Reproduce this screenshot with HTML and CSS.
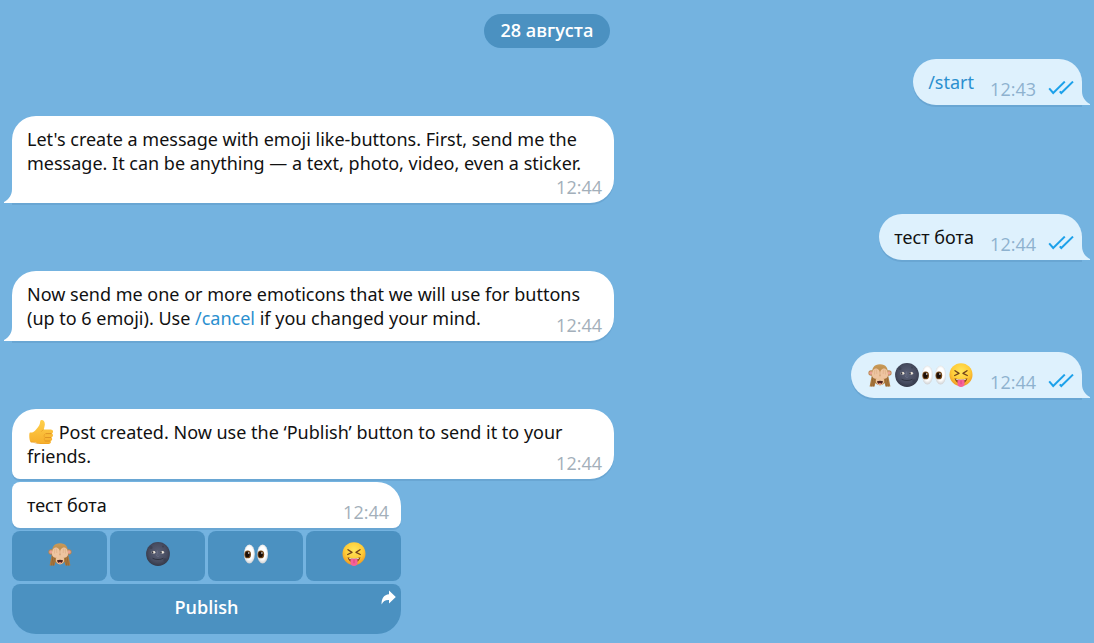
FILE: index.html
```html
<!DOCTYPE html>
<html lang="ru">
<head>
    <meta charset="utf-8">
    <title>Like Bot</title>
    <link rel="stylesheet" href="styles.css">
</head>
<body>
    <!-- shared icons -->
    <svg class="sprite" width="0" height="0" aria-hidden="true">
        <defs>
            <radialGradient id="gold" cx="50%" cy="35%" r="65%">
                <stop offset="0" stop-color="#ffe65c"/>
                <stop offset="0.6" stop-color="#ffcc38"/>
                <stop offset="1" stop-color="#ee9822"/>
            </radialGradient>
            <radialGradient id="night" cx="50%" cy="45%" r="55%">
                <stop offset="0" stop-color="#5b6177"/>
                <stop offset="0.7" stop-color="#474c60"/>
                <stop offset="1" stop-color="#343848"/>
            </radialGradient>
            <linearGradient id="fur" x1="0" y1="0" x2="0" y2="1">
                <stop offset="0" stop-color="#c99a58"/>
                <stop offset="1" stop-color="#a47338"/>
            </linearGradient>
            <radialGradient id="eyeball" cx="50%" cy="45%" r="55%">
                <stop offset="0.6" stop-color="#ffffff"/>
                <stop offset="1" stop-color="#cfd1d3"/>
            </radialGradient>
            <linearGradient id="hand" x1="0" y1="0" x2="0" y2="1">
                <stop offset="0" stop-color="#ffd04b"/>
                <stop offset="1" stop-color="#f6ae2b"/>
            </linearGradient>
        </defs>
        <symbol id="monkey" viewBox="0 0 24 24">
            <circle cx="3.200" cy="10" r="2.800" fill="#b98549"/>
            <circle cx="20.800" cy="10" r="2.800" fill="#b98549"/>
            <circle cx="3" cy="10" r="1.800" fill="#e8a094"/>
            <circle cx="21" cy="10" r="1.800" fill="#e8a094"/>
            <path d="M12 1.200C6 1.200 3.600 5.400 4.100 11c.4 5.600 3 11.300 7.900 11.300S19.500 16.600 19.900 11C20.400 5.400 18 1.200 12 1.200z" fill="url(#fur)"/>
            <path d="M12 13c-3.200 0-4.600 3-4.200 5.600.4 2.300 2 3.800 4.200 3.800s3.800-1.500 4.200-3.800C16.600 16 15.200 13 12 13z" fill="#edc49c"/>
            <path d="M9 18.300c1.800-.8 4.200-.8 6 0-.3 2-1.300 3-3 3s-2.700-1-3-3z" fill="#4f231d"/>
            <path d="M10.500 20.400c.9-.5 2.100-.5 3 0-.7.900-2.300.9-3 0z" fill="#dc6d70"/>
            <path d="M4.100 11L1.600 23.500h5L8.300 15zM19.900 11l2.500 12.500h-5L15.700 15z" fill="#ad7b3f"/>
            <path d="M5 14L3.600 23.500M6.600 15l-1.200 8.500M19 14l1.400 9.500M17.400 15l1.200 8.500" stroke="#87592c" stroke-width=".6"/>
            <path d="M4 12.600c-.3-3.500 1-6.800 3.500-7.100 2.700-.3 4.500 2.200 4.500 4.900 0 2.800-1.500 4.800-3.700 5.300-2 .4-4.100-.9-4.300-3.100zM20 12.600c.3-3.500-1-6.800-3.500-7.100C13.800 5.200 12 7.700 12 10.400c0 2.800 1.500 4.800 3.700 5.300 2 .4 4.100-.9 4.300-3.100z" fill="#eec4a0"/>
            <path d="M6.500 11.500l.3-5M8.800 11l-.2-4.500M17.500 11.500l-.3-5M15.200 11l.2-4.500M12 8v5" stroke="#d5a67c" stroke-width=".5" fill="none"/>
        </symbol>
        <symbol id="moon" viewBox="0 0 24 24">
            <circle cx="12" cy="12" r="11.900" fill="url(#night)"/>
            <circle cx="5" cy="5.500" r="1.500" fill="#3d4254"/>
            <circle cx="19" cy="18" r="1.700" fill="#3a3f51"/>
            <circle cx="17" cy="4.500" r="1" fill="#3d4254"/>
            <ellipse cx="7.300" cy="10.300" rx="2.200" ry="1.500" fill="#83858f"/>
            <ellipse cx="16.200" cy="10.300" rx="2.200" ry="1.500" fill="#83858f"/>
            <circle cx="8" cy="10.300" r="1.200" fill="#f1e9dc"/>
            <circle cx="16.600" cy="10.300" r="1.200" fill="#f1e9dc"/>
            <circle cx="6.600" cy="10.400" r=".8" fill="#30313d"/>
            <circle cx="15" cy="10.400" r=".8" fill="#30313d"/>
            <path d="M11.300 8.500c.4 2.200-.3 4-.7 5.200.6 1 2 1 2.700 0" stroke="#6b7087" stroke-width=".8" fill="none"/>
            <path d="M6.500 16.200c3 1.800 8 1.800 11 0" stroke="#2e3240" stroke-width=".9" fill="none"/>
        </symbol>
        <symbol id="eyes" viewBox="0 0 24 24">
            <ellipse cx="5.400" cy="12" rx="5.400" ry="9.400" fill="url(#eyeball)"/>
            <ellipse cx="18.600" cy="12" rx="5.400" ry="9.400" fill="url(#eyeball)"/>
            <ellipse cx="3.700" cy="12.400" rx="3.300" ry="3.900" fill="#744718"/>
            <ellipse cx="16.900" cy="12.400" rx="3.300" ry="3.900" fill="#744718"/>
            <ellipse cx="3.500" cy="12.400" rx="2.200" ry="2.800" fill="#1b0e08"/>
            <ellipse cx="16.700" cy="12.400" rx="2.200" ry="2.800" fill="#1b0e08"/>
            <circle cx="4.700" cy="11" r=".8" fill="#fff"/>
            <circle cx="17.900" cy="11" r=".8" fill="#fff"/>
        </symbol>
        <symbol id="tongue" viewBox="0 0 24 24">
            <circle cx="12" cy="11.700" r="11.500" fill="url(#gold)"/>
            <path d="M6 7.700l4 2.700-4.300 2.100M18 7.700l-4 2.700 4.300 2.100" fill="none" stroke="#70421a" stroke-width="1.300" stroke-linecap="round" stroke-linejoin="round"/>
            <path d="M5.500 15.300c4 1.500 9 1.500 13 0-.8 3.600-3.200 5.200-6.500 5.200s-5.700-1.600-6.500-5.200z" fill="#8a4c1a"/>
            <path d="M7 16c3.300.8 6.700.8 10 0l-.6.900c-2.800.6-6 .6-8.800 0z" fill="#fff"/>
            <path d="M8.500 17.500c1.200-.8 2.500-1 3.500-.4 1-.6 2.300-.4 3.500.4V21c0 2-1.500 3-3.500 3s-3.500-1-3.500-3z" fill="#f7609a"/>
            <path d="M12 17.500v3.700" stroke="#d33f77" stroke-width=".8"/>
        </symbol>
        <symbol id="thumb" viewBox="0 0 24 24">
            <path d="M1 12.500c2 .1 3.700-.4 5-1.800 2-2.200 4.200-4.600 4.900-7.300.4-1.600.3-3.200 1.700-3.300 2.300-.1 3.500 2.400 3.200 4.800-.2 1.700-.8 3.100-1.100 4.700h7c1.800 0 2.500 1.200 2.300 2.300-.1.800-.6 1.300-1.200 1.600 1.700.8 1.500 3.300-.3 4 1.200 1 .7 3-.9 3.500.8 1.300 0 2.800-1.800 2.900-3.600.3-7.800.2-10.600-.5-1.700-.5-2.600-1.200-4-1.200H1.500C0 19.500-.1 13 1 12.500z" fill="url(#hand)"/>
            <path d="M16.500 13.600h6M16 17.500h6M15.800 21h5.200" stroke="#d98b20" stroke-width=".8" fill="none"/>
            <path d="M14.500 9.700c-1 .5-1.800 1.100-2.300 2M16 14c-1.200 1-1.200 2.500 0 3.500-1 1-.9 2.500 0 3.400" stroke="#e79b25" stroke-width=".7" fill="none"/>
            <path d="M2 22c3-.3 4.800 1.700 8 1.800 3.500.3 7 .3 9.500 0" stroke="#e69722" stroke-width=".6" fill="none"/>
        </symbol>
        <symbol id="read" viewBox="0 0 26 14">
            <path d="M1.200 7.400l4 4.600L16.800 .6M11.800 10.300l1.500 1.700L25 .6" fill="none" stroke="#1da1ea" stroke-width="2"/>
        </symbol>
        <symbol id="tail" viewBox="0 0 9 16">
            <path d="M9 0v16H0v-1c5-2.500 8-7 8-13V0z"/>
        </symbol>
    </svg>

    <main class="chat">
        <time class="date" datetime="08-28">28 августа</time>

        <div class="message out">
            <a class="command" href="#start">/start</a>
            <span class="meta"><time>12:43</time><svg class="read"><use href="#read"/></svg></span>
            <svg class="tail"><use href="#tail"/></svg>
        </div>

        <div class="message in">
            Let's create a message with emoji like-buttons. First, send me the message. It can be anything — a text, photo, video, even a sticker.
            <span class="meta"><time>12:44</time></span>
            <svg class="tail"><use href="#tail"/></svg>
        </div>

        <div class="message out">
            тест бота
            <span class="meta"><time>12:44</time><svg class="read"><use href="#read"/></svg></span>
            <svg class="tail"><use href="#tail"/></svg>
        </div>

        <div class="message in">
            Now send me one or more emoticons that we will use for buttons (up to 6 emoji). Use <a class="command" href="#cancel">/cancel</a> if you changed your mind.
            <span class="meta"><time>12:44</time></span>
            <svg class="tail"><use href="#tail"/></svg>
        </div>

        <div class="message out">
            <span class="emoji-row"><svg class="emoji" role="img" aria-label="Monkey"><use href="#monkey"/></svg><svg class="emoji" role="img" aria-label="Moon"><use href="#moon"/></svg><svg class="emoji" role="img" aria-label="Eyes"><use href="#eyes"/></svg><svg class="emoji" role="img" aria-label="Tongue"><use href="#tongue"/></svg></span>
            <span class="meta"><time>12:44</time><svg class="read"><use href="#read"/></svg></span>
            <svg class="tail"><use href="#tail"/></svg>
        </div>

        <div class="group">
            <div class="message in first">
                <svg class="emoji" role="img" aria-label="Thumbs up"><use href="#thumb"/></svg> Post created. Now use the ‘Publish’ button to send it to your friends.
                <span class="meta"><time>12:44</time></span>
            </div>
            <div class="post">
                <div class="message in middle">
                    тест бота
                    <span class="meta"><time>12:44</time></span>
                </div>
                <div class="keyboard">
                    <button type="button" aria-label="Monkey"><svg class="emoji"><use href="#monkey"/></svg></button>
                    <button type="button" aria-label="Moon"><svg class="emoji"><use href="#moon"/></svg></button>
                    <button type="button" aria-label="Eyes"><svg class="emoji"><use href="#eyes"/></svg></button>
                    <button type="button" aria-label="Tongue"><svg class="emoji"><use href="#tongue"/></svg></button>
                    <button type="button" class="publish">
                        Publish
                        <svg class="share" viewBox="0 0 15 15"><path d="M8 .5L14.800 7 8 13.500V10C4.500 9.800 2.200 11 .6 14.500.3 8.500 3 4.600 8 4.200z" fill="#fff"/></svg>
                    </button>
                </div>
            </div>
        </div>
    </main>
</body>
</html>
```

FILE: styles.css
```css
body {
    margin: 0;
    background-color: #74b3e0;
    font-family: "Noto Sans", "Open Sans", sans-serif;
    font-size: 18px;
    line-height: 24px;
    color: #111;
}
.sprite {
    position: absolute;
}
.chat {
    display: flex;
    flex-direction: column;
    align-items: flex-start;
    gap: 11px;
    padding: 14px 12px 9px;
}
.date {
    align-self: center;
    padding: 4px 17px 6px;
    border-radius: 17px;
    background-color: #4b91c1;
    color: #fff;
    font-family: "Open Sans", sans-serif;
    font-weight: 600;
}

/* bubbles */
.message {
    position: relative;
    display: flow-root;
    box-sizing: border-box;
    max-width: 602px;
    padding: 11px 15px;
    border-radius: 24px;
    box-shadow: 0 2px 0 #69a6d3;
}
/* keeps room for the time in the last line */
.message::after {
    content: "";
    float: right;
    width: 57px;
    height: 17px;
}
.in {
    background-color: #fff;
    border-bottom-left-radius: 0;
}
.out {
    align-self: flex-end;
    background-color: #def1fd;
    border-bottom-right-radius: 0;
}
.out::after {
    width: 93px;
}
.command {
    color: #2b8fcf;
    text-decoration: none;
}
.meta {
    position: absolute;
    right: 12px;
    bottom: 4px;
    display: flex;
    align-items: flex-start;
    gap: 12px;
    color: #a3afba;
    font-family: "Open Sans", sans-serif;
}
.out .meta {
    right: 8px;
    color: #8eb2cf;
}
.read {
    width: 26px;
    height: 14px;
    margin-top: 4px;
}
.tail {
    position: absolute;
    left: -8px;
    bottom: 0;
    width: 9px;
    height: 16px;
    fill: #fff;
}
.out .tail {
    left: auto;
    right: -8px;
    fill: #def1fd;
    transform: scaleX(-1);
}
.emoji {
    width: 24px;
    height: 24px;
    margin: 0 1px 0 2px;
    vertical-align: top;
}

/* grouped messages */
.group {
    display: flex;
    flex-direction: column;
    align-items: flex-start;
    gap: 3px;
}
.first {
    border-bottom-left-radius: 8px;
}
.middle {
    border-radius: 8px 24px 8px 8px;
}
.post {
    width: 389px;
    max-width: 100%;
}
.keyboard {
    display: grid;
    grid-template-columns: repeat(4, 1fr);
    gap: 3px;
    margin-top: 3px;
}
.keyboard button {
    position: relative;
    display: flex;
    align-items: center;
    justify-content: center;
    height: 50px;
    padding: 0 0 4px;
    border: none;
    border-radius: 8px;
    background-color: #4b91c1;
    color: #fff;
    font: inherit;
    font-family: "Open Sans", sans-serif;
    font-weight: 600;
    cursor: pointer;
}
.keyboard button:hover {
    background-color: #4388b8;
}
.keyboard .publish {
    grid-column: 1 / -1;
    border-radius: 8px 8px 24px 24px;
}
.share {
    position: absolute;
    top: 6px;
    right: 5px;
    width: 15px;
    height: 15px;
}
```
